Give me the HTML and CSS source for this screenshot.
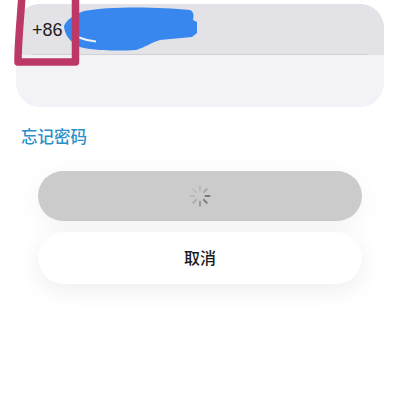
FILE: index.html
```html
<!DOCTYPE html>
<html lang="zh">
<head>
<meta charset="utf-8">
<title>登录</title>
<link rel="stylesheet" href="styles.css">
</head>
<body>
<main class="page">
  <section class="card">
    <div class="row row-phone">
      <span class="code">+86</span>
      <div class="divider"></div>
    </div>
    <div class="row row-password"></div>
  </section>
  <a class="forgot">忘记密码</a>
  <div class="actions">
    <button class="btn btn-loading" aria-label="加载中">
      <svg class="spinner" viewBox="0 0 24 24" width="24" height="24">
        <g stroke-width="2" stroke-linecap="round" fill="none">
          <path d="M12 6.500V2.500" stroke="#b9b9b9"/>
          <path d="M15.900 8.100l2.800-2.800" stroke="#a8a8a8"/>
          <path d="M17.500 12h4" stroke="#777"/>
          <path d="M15.900 15.900l2.800 2.800" stroke="#7f7f7f"/>
          <path d="M12 17.500v4" stroke="#989898"/>
          <path d="M8.100 15.900l-2.800 2.800" stroke="#acacac"/>
          <path d="M6.500 12h-4" stroke="#bbb"/>
          <path d="M8.100 8.100L5.300 5.300" stroke="#bdbdbd"/>
        </g>
      </svg>
    </button>
    <button class="btn btn-cancel">取消</button>
  </div>
</main>
<svg class="markup" viewBox="0 0 400 400" width="400" height="400" aria-hidden="true">
  <path class="scribble" d="M64 26C67 19 74 15 84 11C110 6 160 7 190 10C194 12 194 16 193 20L197 22V33L192 37L160 40C152 42 146 47 136 50C118 51 95 51 80 47C70 43 64 33 64 26Z"/>
  <path class="scribble-gap" d="M79 37.500C84 39.500 90 41 96 41.500"/>
  <path class="frame" d="M22 -6C21 15 18 40 18 62H75.500V-6"/>
</svg>
</body>
</html>
```
FILE: styles.css
```css
* { box-sizing: border-box; }
html, body {
  margin: 0;
  height: 400px;
  overflow: hidden;
  background: #fff;
}
.page {
  width: 400px;
  height: 400px;
  padding: 4px 16px 0;
  display: flex;
  flex-direction: column;
  font-family: "Liberation Sans", "Noto Sans CJK SC", sans-serif;
}
.card {
  height: 103px;
  border-radius: 24px;
  overflow: hidden;
  background: #f2f2f7;
  display: flex;
  flex-direction: column;
}
.row-phone {
  height: 51px;
  flex: none;
  background: #e3e3e7;
  padding-left: 16px;
  display: flex;
  flex-direction: column;
  justify-content: flex-end;
  position: relative;
}
.code {
  position: absolute;
  left: 16px;
  top: 16px;
  font-size: 18px;
  line-height: 20px;
  color: #1c1c1e;
}
.divider {
  height: 1px;
  margin-right: 16px;
  background: #d2d2d6;
}
.row-password { flex: 1; }
.forgot {
  margin: 21px 0 0 5px;
  font-size: 16.500px;
  line-height: 18px;
  font-weight: 500;
  color: #2a8fc8;
}
.actions {
  margin: 25px 6px 0 22px;
  display: flex;
  flex-direction: column;
  gap: 11px;
}
.btn {
  width: 324px;
  border: 0;
  padding: 0;
  display: flex;
  align-items: center;
  justify-content: center;
  font-family: inherit;
}
.btn-loading {
  height: 50px;
  border-radius: 25px;
  background: #cbcbcb;
  box-shadow: 0 6px 24px rgba(0, 0, 0, 0.05);
}
.btn-cancel {
  height: 52px;
  padding-bottom: 2px;
  border-radius: 26px;
  background: #fff;
  font-family: "Noto Sans CJK SC", sans-serif;
  font-size: 16px;
  font-weight: 500;
  color: #1a1a1a;
  box-shadow: 0 6px 24px rgba(0, 0, 0, 0.07);
}
.markup {
  position: absolute;
  left: 0;
  top: 0;
  pointer-events: none;
}
.scribble { fill: #3787ee; }
.scribble-gap {
  fill: none;
  stroke: #eef0f5;
  stroke-width: 2;
}
.frame {
  fill: none;
  stroke: #bc3866;
  stroke-width: 7.500;
  stroke-linejoin: round;
}
```
